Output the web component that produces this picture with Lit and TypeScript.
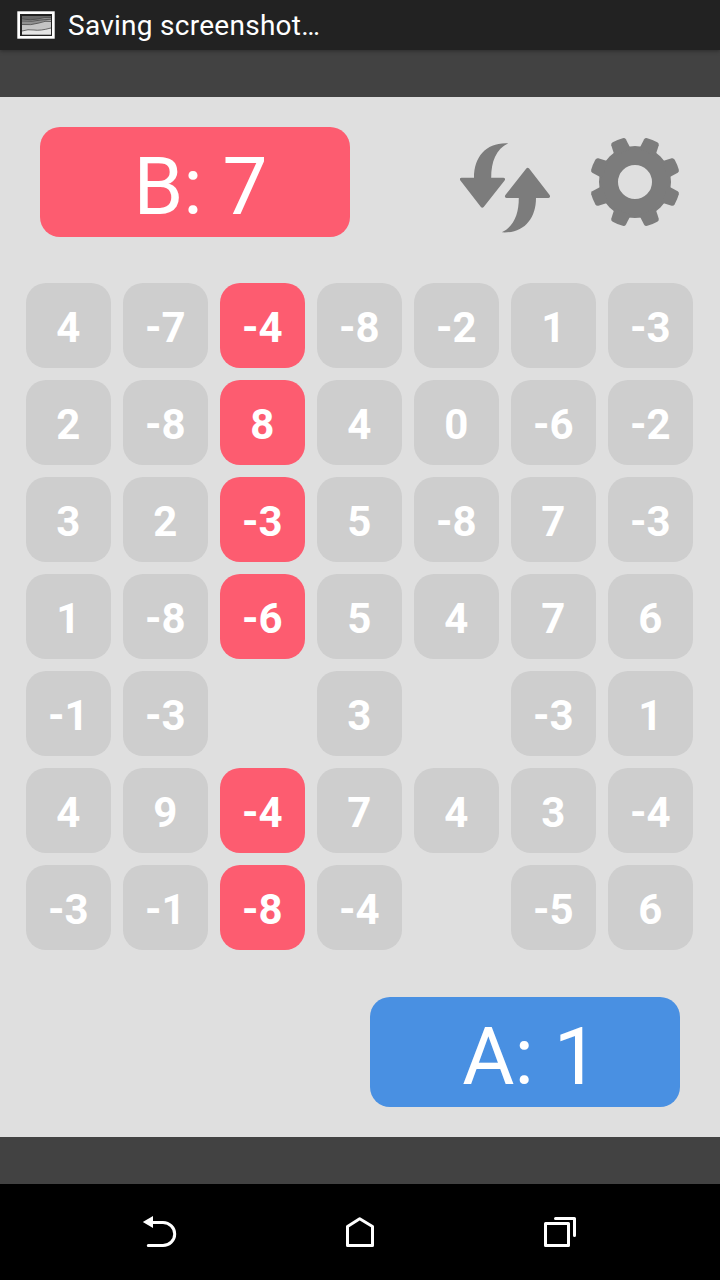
import { LitElement, html, css, svg } from "lit";
import { customElement } from "lit/decorators.js";
import { classMap } from "lit/directives/class-map.js";

const BOARD: (number | null)[][] = [
  [4, -7, -4, -8, -2, 1, -3],
  [2, -8, 8, 4, 0, -6, -2],
  [3, 2, -3, 5, -8, 7, -3],
  [1, -8, -6, 5, 4, 7, 6],
  [-1, -3, null, 3, null, -3, 1],
  [4, 9, -4, 7, 4, 3, -4],
  [-3, -1, -8, -4, null, -5, 6],
];
const ACTIVE_COLUMN = 2;
const TEETH = [0, 1, 2, 3, 4, 5, 6, 7].map((i) => 22.5 + i * 45);
const ARROW =
  "M14 34.7C14 13 27 -1 48.3 .3C36 6 31.2 19 31.2 34.7H43.5Q46 35 44.6 37.6L23.7 64Q22.3 65.6 20.9 64L.4 37.6Q-1 35 1.5 34.7Z";

@customElement("app-root")
class AppRoot extends LitElement {
  static styles = css`
    :host {
      display: flex;
      flex-direction: column;
      width: 720px;
      height: 1280px;
      background: #424242;
      color: #fff;
      font-family: Roboto, sans-serif;
      overflow: hidden;
    }
    svg { display: block; }
    .status {
      display: flex;
      align-items: center;
      height: 50px;
      box-sizing: border-box;
      padding-left: 17px;
      gap: 13px;
      background: #222;
      font-size: 28px;
      letter-spacing: 0.27px;
      line-height: 50px;
      box-shadow: 0 1px 4px rgba(0, 0, 0, 0.35);
    }
    .status span { padding-top: 2px; }
    .game {
      display: flex;
      flex-direction: column;
      height: 1040px;
      box-sizing: border-box;
      margin: 47px 0;
      padding: 30px 26px;
      background: #dfdfdf;
    }
    .top {
      display: flex;
      height: 110px;
      padding-left: 14px;
    }
    .refresh { margin: 16px 0 0 110px; }
    .gear { margin: 9px 0 0 39px; }
    .score {
      width: 310px;
      height: 110px;
      border-radius: 20px;
      box-sizing: border-box;
      padding-top: 5px;
      padding-left: 11px;
      text-align: center;
      font-size: 80px;
      line-height: 110px;
    }
    .b { background: #fd5c70; }
    .a {
      background: #4990e2;
      align-self: flex-end;
      margin: 47px 14px 0 0;
    }
    .board {
      display: grid;
      grid-template-columns: repeat(7, 85px);
      grid-auto-rows: 85px;
      gap: 12px;
      margin-top: 46px;
    }
    .tile {
      border-radius: 20px;
      background: #cecece;
      box-sizing: border-box;
      padding-top: 2px;
      padding-right: 0.5px;
      text-align: center;
      font-size: 42px;
      font-weight: 700;
      line-height: 85px;
    }
    .active { background: #fd5c70; }
    .empty { background: none; }
    .nav {
      display: flex;
      height: 96px;
      background: #000;
    }
    .back { margin: 26px 0 0 140px; }
    .home { margin: 26px 0 0 160px; }
    .recent { margin: 26px 0 0 160px; }
  `;

  render() {
    return html`
      <div class="status">
        <svg width="38" height="28" viewBox="0 0 38 28">
          <rect x="0.3" y="0.3" width="37.4" height="27.4" fill="#fff" />
          <rect x="3" y="3" width="32" height="22" fill="#222" />
          <rect x="5" y="5" width="29" height="18.5" fill="#c4c4c4" />
          <path d="M5 5H34V9.5Q28 9 22 12Q14 14.5 5 13.5Z" fill="#909090" />
          <path d="M5 5H34V6.5Q27 5.8 21 8Q14 9.5 5 8Z" fill="#6a6a6a" />
          <path d="M5 20Q11 18 17 19Q23 20 34 17V23.5H5Z" fill="#e6e6e6" />
          <path d="M5 8Q14 9.5 21 8Q27 5.8 34 6.5M5 10Q16 11 24 9L34 8.2M5 13.5Q14 14.5 22 12Q28 9.5 34 10.5M5 20Q11 18 17 19Q23 20 34 17" fill="none" stroke="#4a4a4a" stroke-width=".8" />
        </svg>
        <span>Saving screenshot…</span>
      </div>
      <div class="game">
        <div class="top">
          <div class="score b">B: 7</div>
          <svg class="refresh" width="90" height="90" viewBox="0 0 90 90" fill="#7c7c7c">
            <path d=${ARROW} />
            <path d=${ARROW} transform="rotate(180 45 44.8)" />
          </svg>
          <svg class="gear" width="92" height="92" viewBox="-46 -46 92 92" fill="#7c7c7c">
            <circle r="26.5" fill="none" stroke="#7c7c7c" stroke-width="19" />
            ${TEETH.map(
              (a) => svg`<path transform=${`rotate(${a})`}
                d="M-8.8 -32L-7.9 -43Q-7.6 -44.9 -5.4 -45.2Q0 -45.8 5.4 -45.2Q7.6 -44.9 7.9 -43L8.8 -32Z" />`,
            )}
          </svg>
        </div>
        <div class="board">
          ${BOARD.flat().map(
            (n, i) => html`<div
              class=${classMap({
                tile: true,
                active: i % 7 === ACTIVE_COLUMN && n !== null,
                empty: n === null,
              })}
            >${n ?? ""}</div>`,
          )}
        </div>
        <div class="score a">A: 1</div>
      </div>
      <div class="nav">
        <svg class="back" width="40" height="44" viewBox="140 1210 40 44">
          <path d="M151 1222.5H163A11.7 11.5 0 0 1 163 1245.5H148.3" fill="none" stroke="#fff" stroke-width="3" stroke-linecap="round" />
          <path d="M142.8 1222L153 1216V1228Z" fill="#fff" />
        </svg>
        <svg class="home" width="40" height="44" viewBox="340 1210 40 44">
          <path d="M347.5 1245.5V1226.5L359.7 1218.8L372.5 1226.5V1245.5Z" fill="none" stroke="#fff" stroke-width="3" stroke-linejoin="round" />
        </svg>
        <svg class="recent" width="40" height="44" viewBox="540 1210 40 44">
          <path d="M545.5 1223.5H568.5V1245.5H545.5ZM555.5 1218.5H574.5V1235.5" fill="none" stroke="#fff" stroke-width="3" stroke-linejoin="round" stroke-linecap="round" />
        </svg>
      </div>
    `;
  }
}
